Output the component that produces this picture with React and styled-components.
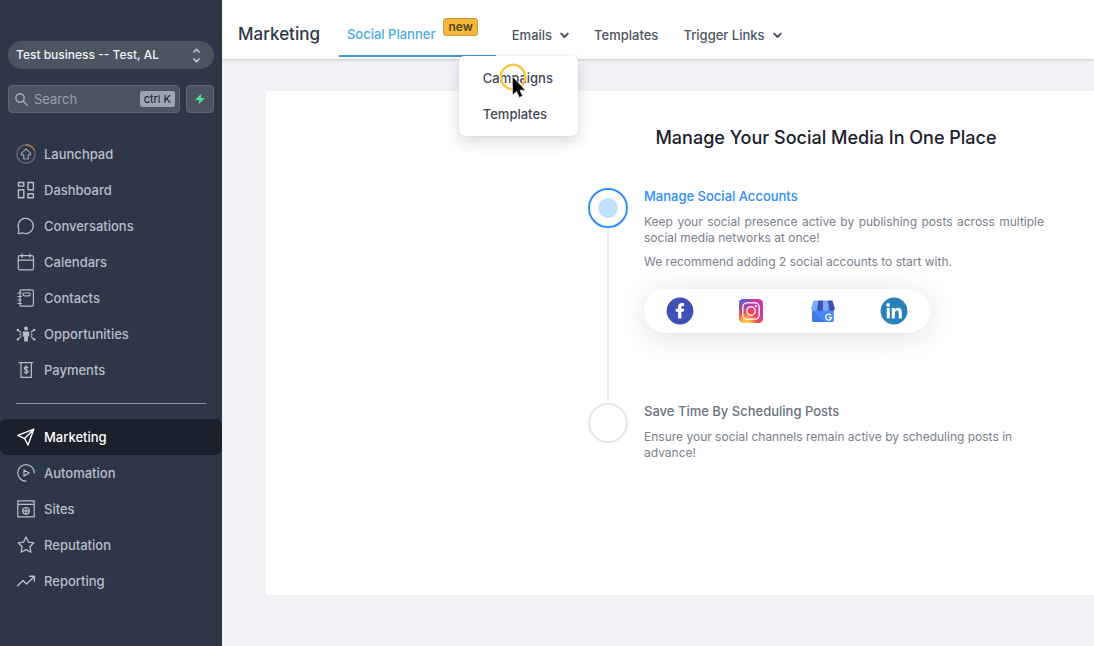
import React from "react";
import styled, { createGlobalStyle, css } from "styled-components";

const Global = createGlobalStyle`
  *, *::before, *::after { box-sizing: border-box; }
  body {
    margin: 0;
    font-family: Inter, "Liberation Sans", sans-serif;
    font-size: 13px;
    line-height: 16px;
    color: #4b5563;
    background: #f2f3f7;
  }
  button, input, select { font: inherit; color: inherit; }
  h1, h2, h3, p, ul, ol { margin: 0; padding: 0; }
  ul, ol { list-style: none; }
  a { color: inherit; text-decoration: none; }
`;

const Shell = styled.div`
  display: flex;
  min-height: 100vh;
  overflow-x: hidden;
`;

/* ---------- sidebar ---------- */

const Sidebar = styled.aside`
  flex: none;
  width: 222px;
  padding-top: 41px;
  background: #2d3748;
  color: #b9bec8;
`;

const AccountPicker = styled.label`
  position: relative;
  display: block;
  margin: 0 8px;
  svg {
    position: absolute;
    top: 7px;
    right: 13px;
    pointer-events: none;
  }
`;

const AccountSelect = styled.select`
  appearance: none;
  display: block;
  width: 100%;
  height: 28px;
  padding: 0 32px 0 8px;
  border: 0;
  border-radius: 14px;
  background: #4a5561;
  color: #f1f3f5;
  font-size: 12px;
  font-weight: 500;
`;

const SearchRow = styled.div`
  display: flex;
  gap: 6px;
  margin: 16px 8px 0;
`;

const SearchBox = styled.label`
  display: flex;
  flex: 1;
  min-width: 0;
  align-items: center;
  height: 28px;
  padding: 0 4px 0 6px;
  gap: 6px;
  border: 1px solid #5d6876;
  border-radius: 4px;
  background: #4a5561;
  svg { flex: none; }
`;

const SearchInput = styled.input`
  flex: 1;
  width: 100%;
  min-width: 0;
  padding: 0;
  border: 0;
  outline: 0;
  background: transparent;
  &::placeholder { color: #9aa3b0; opacity: 1; }
`;

const Shortcut = styled.kbd`
  flex: none;
  padding: 0 4px;
  border-radius: 2px;
  background: #9ca3b1;
  color: #15191f;
  font-family: inherit;
  font-size: 11px;
`;

const QuickButton = styled.button`
  display: grid;
  flex: none;
  place-items: center;
  width: 28px;
  height: 28px;
  padding: 0;
  border: 1px solid #5d6876;
  border-radius: 4px;
  background: #4a5561;
`;

const NavList = styled.ul`
  margin-top: ${(p) => p.$top}px;
`;

const NavLink = styled.a`
  display: flex;
  align-items: center;
  gap: 8px;
  height: 36px;
  padding-left: 16px;
  border-radius: 6px;
  font-weight: 500;
  ${(p) =>
    p.$active &&
    css`
      background: #1a202c;
      color: #ffffff;
    `}
`;

const Divider = styled.hr`
  height: 1px;
  margin: 15px 16px 0;
  border: 0;
  background: #8d95a2;
`;

/* ---------- top bar ---------- */

const Main = styled.div`
  flex: 1;
  min-width: 0;
`;

const TopBar = styled.header`
  position: relative;
  z-index: 2;
  display: flex;
  height: 59px;
  padding-left: 16px;
  background: #ffffff;
  box-shadow: 0 1px 3px rgba(0, 0, 0, 0.18);
`;

const PageTitle = styled.h1`
  align-self: center;
  padding-top: 8px;
  margin-right: 19px;
  color: #2d3748;
  font-size: 17px;
  line-height: 24px;
  font-weight: 500;
`;

const Tab = styled.a`
  display: flex;
  align-items: flex-start;
  gap: 8px;
  height: 57px;
  padding: 26px 18px 0 8px;
  border-bottom: 2px solid #38a0db;
  color: #4cabdf;
  font-weight: 500;
  white-space: nowrap;
`;

const NewBadge = styled.span`
  margin-top: -8px;
  padding: 0 4px;
  border: 1px solid #c79a3b;
  border-radius: 3px;
  background: #f6b73c;
  color: #4d4a12;
  font-size: 12px;
  font-weight: 600;
`;

const Menus = styled.nav`
  display: flex;
  align-items: flex-start;
  gap: 25px;
  padding: 27px 0 0 16px;
  font-weight: 500;
`;

const MenuItem = styled.div`
  position: relative;
`;

const MenuButton = styled.button`
  display: flex;
  align-items: center;
  gap: 8px;
  padding: 0;
  border: 0;
  background: none;
  white-space: nowrap;
`;

const Dropdown = styled.ul`
  position: absolute;
  top: 29px;
  left: -53px;
  width: 119px;
  padding: 4px 0;
  border-radius: 5px;
  background: #ffffff;
  color: #3f4858;
  box-shadow: 0 0 1px rgba(0, 0, 0, 0.3), 0 6px 16px rgba(0, 0, 0, 0.14);
  a {
    display: block;
    padding: 10px 24px;
  }
`;

const Pointer = styled.svg`
  position: absolute;
  top: 6px;
  left: 40px;
  pointer-events: none;
`;

/* ---------- content ---------- */

const Content = styled.main`
  padding: 32px 0 51px 44px;
`;

const Card = styled.section`
  min-height: 504px;
  padding: 35px 16px 32px 322px;
  background: #ffffff;
`;

const Guide = styled.div`
  max-width: 476px;
`;

const GuideTitle = styled.h2`
  color: #1a202c;
  text-align: center;
  white-space: nowrap;
  font-size: 18px;
  line-height: 24px;
  font-weight: 500;
`;

const Steps = styled.ol`
  margin-top: 38px;
`;

const Step = styled.li`
  display: grid;
  grid-template-columns: 40px minmax(0, 400px);
  column-gap: 16px;
`;

const StepRail = styled.div`
  display: flex;
  flex-direction: column;
  align-items: center;
  &::after {
    content: "";
    display: ${(p) => (p.$last ? "none" : "block")};
    flex: 1;
    width: 2px;
    margin-bottom: 2px;
    background: #ececf2;
  }
`;

const StepMark = styled.span`
  display: grid;
  place-items: center;
  width: 40px;
  height: 40px;
  border: 2px solid ${(p) => (p.$active ? "#2f8ef7" : "#e6e6ec")};
  border-radius: 50%;
  &::after {
    content: "";
    width: 20px;
    height: 20px;
    border-radius: 50%;
    background: ${(p) => (p.$active ? "#c3e1fd" : "transparent")};
  }
`;

const StepBody = styled.div`
  min-height: ${(p) => (p.$last ? 0 : 215)}px;
`;

const StepTitle = styled.h3`
  margin-bottom: 10px;
  color: ${(p) => (p.$active ? "#2f8ef7" : "#6b7280")};
  font-size: 13px;
  line-height: 16px;
  font-weight: 500;
`;

const StepText = styled.p`
  margin-bottom: 8px;
  color: #7a808d;
  font-size: 12px;
  line-height: 16px;
  text-align: ${(p) => (p.$justify ? "justify" : "left")};
`;

const Networks = styled.ul`
  display: grid;
  grid-template-columns: repeat(4, 1fr);
  max-width: 286px;
  margin-top: 19px;
  padding: 8px 0;
  border-radius: 22px;
  background: #ffffff;
  box-shadow: 0 4px 32px rgba(0, 0, 0, 0.12);
  li { display: grid; place-items: center; }
  svg { display: block; }
`;

/* ---------- icons ---------- */

const Icon = ({ children, w = 1.2 }) => (
  <svg width="20" height="20" viewBox="0 0 20 20" fill="none" stroke="currentColor"
    strokeWidth={w} strokeLinecap="round" strokeLinejoin="round" aria-hidden="true">
    {children}
  </svg>
);

const icons = {
  launchpad: (
    <Icon>
      <circle cx="10" cy="10" r="9.2" stroke="#667081" />
      <path d="M10 0.8A9.2 9.2 0 0 1 18.2 6" stroke="#c77b3a" />
      <path d="M10 4.8 14.6 9.4V10.8H12.2V15H7.8V10.8H5.4V9.4Z" stroke="#99a1ae" />
    </Icon>
  ),
  dashboard: (
    <Icon w={1.4}>
      <path d="M2.4 2.5h5.4v3.6H2.4zM12 2.5h5.4v7.2H12zM2.4 9.7h5.4v8H2.4zM12 13.7h5.4v4H12z" />
    </Icon>
  ),
  chat: <Icon><path d="M2.2 17.6 3 13.5A7.6 7.6 0 1 1 6.7 16.9Z" /></Icon>,
  calendar: <Icon><rect x="2.3" y="3.6" width="15.2" height="14.3" rx="1.6" /><path d="M2.3 8.2h15.2M6 1.8v3.6M13.8 1.8v3.6" /></Icon>,
  contacts: (
    <Icon>
      <rect x="4" y="1.8" width="13.4" height="16.4" rx="1.6" />
      <rect x="7" y="5" width="7.2" height="2.8" rx="1.2" />
      <path d="M1.8 5h3.6M1.8 8.5h3.6M1.8 12h3.6M1.8 15.5h3.6" />
    </Icon>
  ),
  people: (
    <Icon w={1.1}>
      <circle cx="10" cy="4.6" r="2" fill="currentColor" stroke="none" />
      <path d="M7.8 7.6h4.4q1 0 1 1v4h-1.3v5H8.1v-5H6.8v-4q0-1 1-1Z" fill="currentColor" stroke="none" />
      <path d="M1.8 6 4.9 8.2M18.2 6 15.1 8.2M1.8 15.4 4.9 12.6M18.2 15.4 15.1 12.6" />
      <g fill="currentColor" stroke="none">
        <circle cx="1.8" cy="6" r="1.2" /><circle cx="18.2" cy="6" r="1.2" />
        <circle cx="4.4" cy="10.6" r="1" /><circle cx="15.6" cy="10.6" r="1" />
        <circle cx="1.8" cy="15.4" r="1.2" /><circle cx="18.2" cy="15.4" r="1.2" />
      </g>
    </Icon>
  ),
  payments: (
    <Icon>
      <path d="M3 2.6h14M5 2.6v14.8h10.4V2.6" />
      <path d="M12 7.8q-.6-.9-1.9-.9-1.7 0-1.7 1.4 0 1.2 1.8 1.5 1.9.3 1.9 1.6 0 1.4-1.9 1.4-1.5 0-2-1M10.1 5.8v8.2" />
    </Icon>
  ),
  send: <Icon w={1.4}><path d="M17.8 2.2 12 18 8.6 11.6 1.8 8.4ZM17.8 2.2 8.6 11.6" /></Icon>,
  automation: <Icon><path d="M10 18.2A8.3 8.3 0 1 1 18.3 10" /><path d="M8 6.9 13.2 10 8 13.1Z" /></Icon>,
  sites: (
    <Icon>
      <rect x="1.8" y="1.9" width="16.4" height="16" />
      <path d="M1.8 5.4h16.4" />
      <circle cx="10" cy="11.8" r="3.3" />
      <path d="M6.7 11.8h6.6M10 8.5v6.6" />
    </Icon>
  ),
  star: <Icon w={1.3}><path d="M10 2l2.4 5.1 5.5.7-4 3.9 1 5.6L10 14.6l-4.9 2.7 1-5.6-4-3.9 5.5-.7Z" /></Icon>,
  trend: <Icon w={1.4}><path d="M1.6 14.8 7 9.4l3.6 3.6L18.2 5.4M13.6 5.2h4.8V10" /></Icon>,
};

const Chevron = () => (
  <svg width="9" height="7" viewBox="0 0 9 7" fill="none" stroke="currentColor" strokeWidth="2"
    strokeLinecap="round" strokeLinejoin="round" aria-hidden="true">
    <path d="M1.2 1.6 4.5 5 7.8 1.6" />
  </svg>
);

const Facebook = () => (
  <svg width="28" height="28" viewBox="0 0 28 28" role="img" aria-label="Facebook">
    <circle cx="14" cy="14" r="13.4" fill="#3f51b5" />
    <path d="M12.1 21.6V14.7H9.8V11.7H12.1V10.1C12.1 7.4 13.4 6.1 16.2 6.1H18.1V8.9H16.7C15.6 8.9 15.4 9.3 15.4 10.3V11.7H18.1L17.7 14.7H15.4V21.6Z" fill="#fff" />
  </svg>
);

const Instagram = () => (
  <svg width="28" height="28" viewBox="0 0 28 28" role="img" aria-label="Instagram">
    <defs>
      <radialGradient id="igWarm" cx="0.3" cy="1.02" r="1">
        <stop offset="0" stopColor="#ffdd55" />
        <stop offset="0.2" stopColor="#ffb347" />
        <stop offset="0.48" stopColor="#f4484b" />
        <stop offset="0.78" stopColor="#cc39a4" />
        <stop offset="1" stopColor="#c837ab" />
      </radialGradient>
      <radialGradient id="igCool" cx="0" cy="0" r="0.65">
        <stop offset="0" stopColor="#4168c9" />
        <stop offset="1" stopColor="#4168c9" stopOpacity="0" />
      </radialGradient>
    </defs>
    <rect x="2" y="2" width="24" height="24" rx="4.5" fill="url(#igWarm)" />
    <rect x="2" y="2" width="24" height="24" rx="4.5" fill="url(#igCool)" />
    <g fill="none" stroke="#ffe3e9" strokeWidth="1.5">
      <rect x="5.8" y="5.8" width="16.4" height="16.4" rx="4.4" />
      <circle cx="14" cy="14" r="4.2" />
    </g>
    <circle cx="18.9" cy="9.1" r="1.1" fill="#fff" />
  </svg>
);

const GoogleBusiness = () => (
  <svg width="28" height="28" viewBox="0 0 28 28" role="img" aria-label="Google Business Profile">
    <path d="M3.2 9H24.8V23.6Q24.8 25 23.4 25H4.6Q3.2 25 3.2 23.6Z" fill="#4989f5" />
    <path d="M3.2 13 15 25H4.6Q3.2 25 3.2 23.6Z" fill="#3c78e8" />
    <path d="M4.6 3.4H9.2L8.2 11A3 3 0 0 1 2.2 11Z" fill="#7baaf7" />
    <path d="M9.2 3.4H14V11A2.9 2.9 0 0 1 8.2 11Z" fill="#3f51b5" />
    <path d="M14 3.4H18.8L19.8 11A2.9 2.9 0 0 1 14 11Z" fill="#7baaf7" />
    <path d="M18.8 3.4H23.4L25.8 11A3 3 0 0 1 19.8 11Z" fill="#3f51b5" />
    <path d="M22 18.1A3 3 0 1 0 22.7 20.5H19.8" fill="none" stroke="#fff" strokeWidth="1.3" />
  </svg>
);

const LinkedIn = () => (
  <svg width="28" height="28" viewBox="0 0 28 28" role="img" aria-label="LinkedIn">
    <circle cx="14" cy="14" r="13.4" fill="#2a7fbd" />
    <g fill="#fff">
      <circle cx="8.2" cy="8" r="1.9" />
      <rect x="6.7" y="11" width="3.1" height="10.4" />
      <path d="M11.8 11H14.8V12.5Q15.8 10.8 18 10.8 21.8 10.8 21.8 15.2V21.4H18.7V15.9Q18.7 13.5 17 13.5 14.9 13.5 14.9 16V21.4H11.8Z" />
    </g>
  </svg>
);

const primary = [
  ["Launchpad", "launchpad"],
  ["Dashboard", "dashboard"],
  ["Conversations", "chat"],
  ["Calendars", "calendar"],
  ["Contacts", "contacts"],
  ["Opportunities", "people"],
  ["Payments", "payments"],
];

const secondary = [
  ["Marketing", "send"],
  ["Automation", "automation"],
  ["Sites", "sites"],
  ["Reputation", "star"],
  ["Reporting", "trend"],
];

const NavGroup = ({ items, top, active }) => (
  <NavList $top={top}>
    {items.map(([label, icon]) => (
      <li key={label}>
        <NavLink href="#" $active={label === active} aria-current={label === active ? "page" : undefined}>
          {icons[icon]}
          {label}
        </NavLink>
      </li>
    ))}
  </NavList>
);

export default function App() {
  return (
    <>
      <Global />
      <Shell>
        <Sidebar>
          <AccountPicker>
            <AccountSelect aria-label="Account">
              <option>Test business -- Test, AL</option>
            </AccountSelect>
            <svg width="9" height="15" viewBox="0 0 9 15" fill="none" stroke="#c5cad1" strokeWidth="1.5"
              strokeLinecap="round" strokeLinejoin="round" aria-hidden="true">
              <path d="M1.8 4 4.5 1.4 7.2 4M1.8 11 4.5 13.6 7.2 11" />
            </svg>
          </AccountPicker>
          <SearchRow>
            <SearchBox>
              <svg width="13" height="13" viewBox="0 0 13 13" fill="none" stroke="#a6adb8" strokeWidth="1.4"
                strokeLinecap="round" aria-hidden="true">
                <circle cx="5" cy="5" r="4.2" />
                <path d="M8.2 8.2 12.2 12.2" />
              </svg>
              <SearchInput type="text" placeholder="Search" aria-label="Search" />
              <Shortcut>ctrl K</Shortcut>
            </SearchBox>
            <QuickButton aria-label="Quick actions">
              <svg width="12" height="12" viewBox="0 0 12 12" fill="#57dc9b" aria-hidden="true">
                <path d="M7.4 0.4 1 7H5L4.4 11.6 11 5H7Z" />
              </svg>
            </QuickButton>
          </SearchRow>
          <nav aria-label="Main">
            <NavGroup items={primary} top={23} />
            <Divider />
            <NavGroup items={secondary} top={15} active="Marketing" />
          </nav>
        </Sidebar>

        <Main>
          <TopBar>
            <PageTitle>Marketing</PageTitle>
            <Tab href="#">
              Social Planner
              <NewBadge>new</NewBadge>
            </Tab>
            <Menus aria-label="Marketing">
              <MenuItem>
                <MenuButton aria-expanded="true">
                  Emails
                  <Chevron />
                </MenuButton>
                <Dropdown>
                  <li><a href="#">Campaigns</a></li>
                  <li><a href="#">Templates</a></li>
                  <Pointer as="li" role="presentation">
                    <svg width="30" height="40" viewBox="0 0 30 40" aria-hidden="true">
                      <circle cx="14" cy="15" r="12.2" fill="none" stroke="#f9c646" strokeWidth="2.4" />
                      <path d="M13.5 14.5V33L17.5 29.4 20.4 35.4 23.6 34 20.9 28.2H26.4Z" fill="#000" stroke="#fff" strokeWidth="0.6" />
                    </svg>
                  </Pointer>
                </Dropdown>
              </MenuItem>
              <a href="#">Templates</a>
              <MenuButton>
                Trigger Links
                <Chevron />
              </MenuButton>
            </Menus>
          </TopBar>

          <Content>
            <Card>
              <Guide>
                <GuideTitle>Manage Your Social Media In One Place</GuideTitle>
                <Steps>
                  <Step>
                    <StepRail><StepMark $active /></StepRail>
                    <StepBody>
                      <StepTitle $active>Manage Social Accounts</StepTitle>
                      <StepText $justify>
                        Keep your social presence active by publishing posts across multiple social media
                        networks at once!
                      </StepText>
                      <StepText>We recommend adding 2 social accounts to start with.</StepText>
                      <Networks>
                        <li><Facebook /></li>
                        <li><Instagram /></li>
                        <li><GoogleBusiness /></li>
                        <li><LinkedIn /></li>
                      </Networks>
                    </StepBody>
                  </Step>
                  <Step>
                    <StepRail $last><StepMark /></StepRail>
                    <StepBody $last>
                      <StepTitle>Save Time By Scheduling Posts</StepTitle>
                      <StepText>
                        Ensure your social channels remain active by scheduling posts in advance!
                      </StepText>
                    </StepBody>
                  </Step>
                </Steps>
              </Guide>
            </Card>
          </Content>
        </Main>
      </Shell>
    </>
  );
}
